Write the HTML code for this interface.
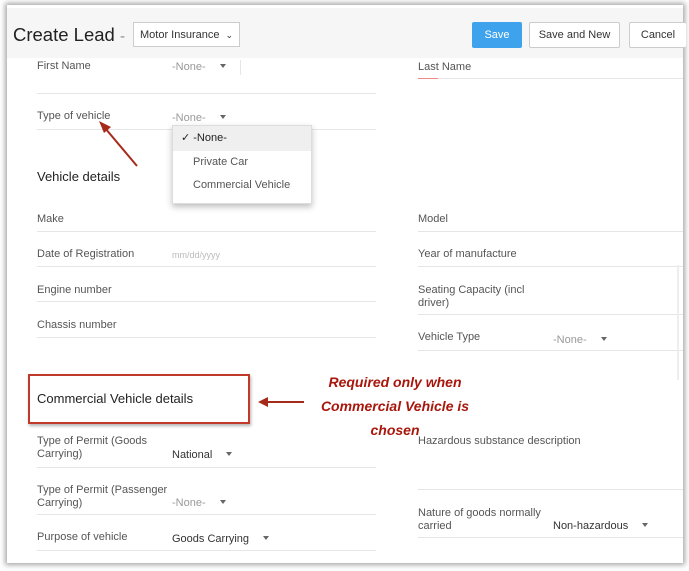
<!DOCTYPE html><html><head><style>
body{margin:0;width:689px;height:571px;background:#fff;font-family:"Liberation Sans",sans-serif;position:relative;overflow:hidden}
.card{position:absolute;left:7px;top:5px;width:676px;height:558px;background:#fff;box-shadow:0 0 5px 2px rgba(0,0,0,.35)}
.hd{position:absolute;left:7px;top:8px;width:676px;height:50px;background:#f6f6f6}
.a{position:absolute;white-space:nowrap}
.l{font-size:11px;color:#555;line-height:13px}
.v{font-size:11px;color:#333}
.g{color:#999}
.ln{position:absolute;height:1px;background:#e6e6e6}
.tri{display:inline-block;width:0;height:0;border-left:3px solid transparent;border-right:3px solid transparent;border-top:4px solid #666;margin-left:14px;vertical-align:2px}
.btn{position:absolute;top:22px;height:24px;border:1px solid #ccc;background:#fff;font-size:11px;color:#333;text-align:center;line-height:24px;border-radius:2px}
.red{position:absolute;left:300px;width:190px;text-align:center;color:#a8170c;font-style:italic;font-weight:bold;font-size:14px}
</style></head><body>
<div class="card"></div>
<div class="hd"></div>
<div class="a" style="left:13px;top:24px;font-size:18.5px;color:#222">Create Lead <span style="color:#888;font-size:15px">-</span></div>
<div class="a" style="left:133px;top:22px;width:107px;height:25px;border:1px solid #ccc;background:#fff;font-size:11px;color:#333;line-height:25px;padding-left:6px;box-sizing:border-box">Motor Insurance<span style="position:absolute;right:6px;font-size:9px">⌄</span></div>
<div class="btn" style="left:472px;width:48px;background:#3ea3ec;border-color:#3ea3ec;color:#fff">Save</div>
<div class="btn" style="left:529px;width:89px">Save and New</div>
<div class="btn" style="left:629px;width:56px;border-right:none">Cancel</div>

<div class="a l" style="left:37px;top:60px">First Name</div>
<div class="a v g" style="left:172px;top:61px">-None-<span class="tri"></span></div>
<div class="ln" style="left:240px;top:60px;width:1px;height:15px"></div>
<div class="a l" style="left:418px;top:61px">Last Name</div>
<div class="ln" style="left:418px;top:78px;width:265px"></div>
<div class="ln" style="left:418px;top:78px;width:20px;background:#f08a86"></div>
<div class="ln" style="left:37px;top:93px;width:339px"></div>

<div class="a l" style="left:37px;top:110px">Type of vehicle</div>
<div class="a v g" style="left:172px;top:112px">-None-<span class="tri"></span></div>
<div class="ln" style="left:37px;top:129px;width:339px"></div>
<svg class="a" style="left:95px;top:118px" width="50" height="52"><line x1="42" y1="48" x2="10" y2="10" stroke="#a52a1a" stroke-width="2"/><polygon points="4,3 16,9 9,15" fill="#a52a1a"/></svg>

<div class="a" style="left:37px;top:169px;font-size:13px;color:#222">Vehicle details</div>

<div class="a" style="left:172px;top:125px;width:138px;height:77px;background:#fff;border:1px solid #ddd;box-shadow:0 3px 6px rgba(0,0,0,.25)">
<div style="height:25px;background:#efefef;font-size:11px;color:#222;line-height:25px;padding-left:8px">✓ -None-</div>
<div style="height:23px;font-size:11px;color:#555;line-height:23px;padding-left:20px">Private Car</div>
<div style="height:23px;font-size:11px;color:#555;line-height:23px;padding-left:20px">Commercial Vehicle</div>
</div>

<div class="a l" style="left:37px;top:213px">Make</div><div class="ln" style="left:37px;top:231px;width:339px"></div>
<div class="a l" style="left:37px;top:248px">Date of Registration</div><div class="a g" style="left:172px;top:250px;font-size:9px;color:#bbb">mm/dd/yyyy</div><div class="ln" style="left:37px;top:266px;width:339px"></div>
<div class="a l" style="left:37px;top:284px">Engine number</div><div class="ln" style="left:37px;top:301px;width:339px"></div>
<div class="a l" style="left:37px;top:319px">Chassis number</div><div class="ln" style="left:37px;top:337px;width:339px"></div>

<div class="a l" style="left:418px;top:213px">Model</div><div class="ln" style="left:418px;top:231px;width:265px"></div>
<div class="a l" style="left:418px;top:248px">Year of manufacture</div><div class="ln" style="left:418px;top:266px;width:265px"></div>
<div class="a l" style="left:418px;top:284px">Seating Capacity (incl<br>driver)</div><div class="ln" style="left:418px;top:314px;width:265px"></div>
<div class="a l" style="left:418px;top:331px">Vehicle Type</div><div class="a v g" style="left:553px;top:334px">-None-<span class="tri"></span></div><div class="ln" style="left:418px;top:350px;width:265px"></div>
<div class="ln" style="left:677px;top:265px;width:2px;height:115px;background:#eee"></div>

<div class="a" style="left:28px;top:374px;width:218px;height:46px;border:2px solid #c0392b;box-shadow:1px 2px 3px rgba(0,0,0,.3)"></div>
<div class="a" style="left:37px;top:391px;font-size:13px;color:#222">Commercial Vehicle details</div>
<svg class="a" style="left:256px;top:396px" width="50" height="12"><line x1="10" y1="6" x2="48" y2="6" stroke="#a52a1a" stroke-width="2"/><polygon points="2,6 12,1 12,11" fill="#a52a1a"/></svg>
<div class="red" style="top:374px">Required only when</div>
<div class="red" style="top:398px">Commercial Vehicle is</div>
<div class="red" style="top:422px">chosen</div>

<div class="a l" style="left:37px;top:435px">Type of Permit (Goods<br>Carrying)</div><div class="a v" style="left:172px;top:449px">National<span class="tri"></span></div><div class="ln" style="left:37px;top:467px;width:339px"></div>
<div class="a l" style="left:37px;top:484px">Type of Permit (Passenger<br>Carrying)</div><div class="a v g" style="left:172px;top:497px">-None-<span class="tri"></span></div><div class="ln" style="left:37px;top:514px;width:339px"></div>
<div class="a l" style="left:37px;top:531px">Purpose of vehicle</div><div class="a v" style="left:172px;top:533px">Goods Carrying<span class="tri"></span></div><div class="ln" style="left:37px;top:550px;width:339px"></div>

<div class="a l" style="left:418px;top:435px">Hazardous substance description</div><div class="ln" style="left:418px;top:489px;width:265px"></div>
<div class="a l" style="left:418px;top:507px">Nature of goods normally<br>carried</div><div class="a v" style="left:553px;top:520px">Non-hazardous<span class="tri"></span></div><div class="ln" style="left:418px;top:537px;width:265px"></div>
</body></html>
